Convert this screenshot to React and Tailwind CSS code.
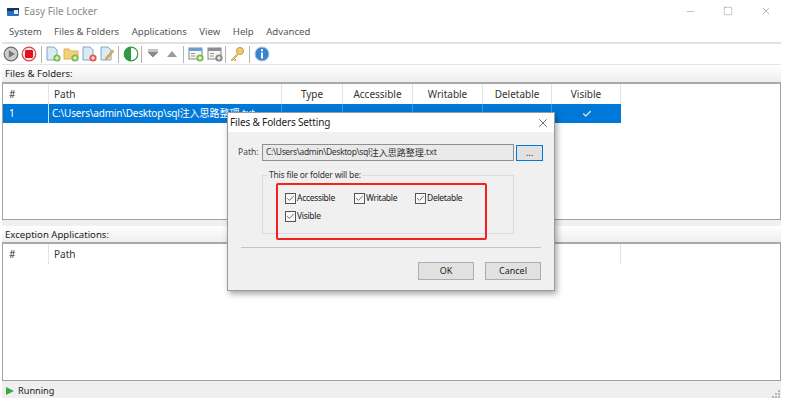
import { Check, Minus, Square, X } from 'lucide-react';

const font = "font-['Noto_Sans','Noto_Sans_CJK_SC',sans-serif]";

const columns = [
  { name: '#', width: 'w-[46px]', align: 'pl-[6px]' },
  { name: 'Path', width: 'w-[233px]', align: 'pl-[5px]' },
  { name: 'Type', width: 'w-[61px]', align: 'justify-center' },
  { name: 'Accessible', width: 'w-[70px]', align: 'justify-center' },
  { name: 'Writable', width: 'w-[70px]', align: 'justify-center' },
  { name: 'Deletable', width: 'w-[69px]', align: 'justify-center' },
  { name: 'Visible', width: 'w-[69px]', align: 'justify-center' },
];

// the lower table only has labels on the first two columns
const exceptionColumns = columns.map((c, i) => (i < 2 ? c : { ...c, name: '' }));

const Sep = () => <div className="w-px h-[17px] bg-[#b4b4b4]"></div>;

const Doc = ({ children, fill = '#dceaf6', stroke = '#7fa6c9' }) => (
  <svg width="16" height="16" viewBox="0 0 16 16">
    <path d="M2 1h7l3 3v10H2z" fill={fill} stroke={stroke} strokeWidth="1" />
    {children}
  </svg>
);

const Badge = ({ color }) => (
  <>
    <circle cx="12" cy="12" r="3.6" fill={color} />
    <path d="M10 12h4M12 10v4" stroke="#fff" strokeWidth="1" />
  </>
);

const Form = ({ head, badge }) => (
  <svg width="16" height="16" viewBox="0 0 16 16">
    <rect x="1" y="2" width="13" height="11" fill="#f4f6f8" stroke="#7b8794" />
    <rect x="1" y="2" width="13" height="3" fill={head} />
    <path d="M3 7.5h4M3 10h4" stroke="#c08a4a" strokeWidth="1" />
    <Badge color={badge} />
  </svg>
);

const Tool = ({ children, className = '' }) => (
  <div className={`w-[18px] h-[18px] flex items-center justify-center ${className}`}>{children}</div>
);

const Toolbar = () => (
  <div className="h-[21px] flex items-center border-b border-[#e6e6e6]">
    <Tool>
      <svg width="16" height="16" viewBox="0 0 16 16">
        <circle cx="8" cy="8" r="6.8" fill="#cfcfcf" stroke="#6a6a6a" strokeWidth="1.2" />
        <path d="M5.8 4.2 12 8l-6.2 3.8z" fill="#777" />
      </svg>
    </Tool>
    <Tool>
      <svg width="16" height="16" viewBox="0 0 16 16">
        <circle cx="8" cy="8" r="6.8" fill="#fbe3e3" stroke="#d8434b" strokeWidth="1.2" />
        <rect x="4" y="4" width="8" height="8" rx="1" fill="#e0101c" />
      </svg>
    </Tool>
    <div className="w-[6px] flex justify-center"><Sep /></div>
    <Tool><Doc><Badge color="#7cbc4a" /></Doc></Tool>
    <Tool>
      <svg width="16" height="16" viewBox="0 0 16 16">
        <path d="M1 3h5l1.5 2H15v8H1z" fill="#f3cf76" stroke="#d8b25e" />
        <Badge color="#7cbc4a" />
      </svg>
    </Tool>
    <Tool><Doc><Badge color="#e8564a" /></Doc></Tool>
    <Tool>
      <Doc>
        <path d="M7 11.5 13.5 4l1.4 1.2L8.4 12.8l-2 .6z" fill="#eeb04c" stroke="#b67f2c" strokeWidth="0.6" />
      </Doc>
    </Tool>
    <div className="w-[6px] ml-[-1px] flex justify-center"><Sep /></div>
    <Tool className="ml-[1px]">
      <svg width="16" height="16" viewBox="0 0 16 16">
        <circle cx="8" cy="8" r="6.8" fill="#fff" stroke="#2f9a3f" strokeWidth="1.2" />
        <path d="M8 1.2a6.8 6.8 0 0 0 0 13.6z" fill="#2f9a3f" />
      </svg>
    </Tool>
    <div className="w-[2px] flex justify-center"><Sep /></div>
    <Tool className="ml-[2px]">
      <svg width="14" height="10" viewBox="0 0 14 10">
        <path d="M2 1h10M2 3h10l-5 5z" stroke="#8a8a8a" strokeWidth="1" fill="#8a8a8a" />
      </svg>
    </Tool>
    <Tool className="ml-[1px]">
      <svg width="14" height="10" viewBox="0 0 14 10">
        <path d="M2 8h10L7 2z" fill="#9a9a9a" />
      </svg>
    </Tool>
    <div className="w-[2px] ml-[1px] flex justify-center"><Sep /></div>
    <Tool className="ml-[3px]"><Form head="#6f9fd0" badge="#7cbc4a" /></Tool>
    <Tool className="ml-[1px]"><Form head="#8a8f96" badge="#8a8a8a" /></Tool>
    <div className="w-[2px] flex justify-center"><Sep /></div>
    <Tool className="ml-[2px]">
      <svg width="16" height="16" viewBox="0 0 16 16">
        <circle cx="11" cy="5" r="3.6" fill="#f0c76a" stroke="#c9a050" />
        <path d="M8.5 7.5 2 14l1 1 1.5-1.5L6 15l1-1-1.5-1.5 3.5-3.5" fill="#f0c76a" stroke="#c9a050" strokeWidth="0.8" />
      </svg>
    </Tool>
    <div className="w-[2px] ml-[2px] flex justify-center"><Sep /></div>
    <Tool className="ml-[3px]">
      <svg width="16" height="16" viewBox="0 0 16 16">
        <circle cx="8" cy="8" r="7" fill="#3b82d0" stroke="#a8c8ea" strokeWidth="1" />
        <rect x="7" y="3.2" width="2" height="2" fill="#fff" />
        <rect x="7" y="6.5" width="2" height="6" fill="#fff" />
      </svg>
    </Tool>
  </div>
);

const SectionTitle = ({ children, className = '' }) => (
  <div className={`flex items-center pl-[3px] pt-[2px] bg-gradient-to-b from-white to-[#eeeeee] border-b-2 border-[#a9a9a9] text-[9.6px] text-[#222] ${className}`}>
    {children}
  </div>
);

const HeaderRow = ({ cols }) => (
  <div className="flex h-[20px]">
    {cols.map((c, i) => (
      <div key={i} className={`${c.width} ${c.align} flex items-center border-r border-[#e3e3e3] text-[10px] text-[#333]`}>
        {c.name}
      </div>
    ))}
  </div>
);

const SelectedRow = () => (
  <div className="flex h-[19px] bg-[#0078d7] text-white text-[10px] w-[618px]">
    <div className="w-[46px] pl-[6px] flex items-center border-r border-[#cfe4f7]">1</div>
    <div className="w-[233px] pl-[3px] flex items-center border-r border-[#3d95e0] whitespace-nowrap overflow-hidden">
      <span className="tracking-[-0.2px]">C:\Users\admin\Desktop\sql</span>注入思路整理.txt
    </div>
    <div className="w-[61px] border-r border-[#3d95e0]"></div>
    <div className="w-[70px] border-r border-[#3d95e0]"></div>
    <div className="w-[70px] border-r border-[#3d95e0]"></div>
    <div className="w-[69px] border-r border-[#3d95e0]"></div>
    <div className="w-[69px] flex items-center justify-center">
      <Check size={10} strokeWidth={3.5} className="text-[#cfe0ef]" />
    </div>
  </div>
);

const Box = ({ label, className = '' }) => (
  <label className={`flex items-center gap-[1px] text-[8.5px] tracking-[-0.3px] text-[#222] ${className}`}>
    <span className="w-[11px] h-[11px] border border-[#555] bg-[#f7f7f7] flex items-center justify-center">
      <Check size={9} strokeWidth={2} className="text-[#444]" />
    </span>
    {label}
  </label>
);

const Dialog = () => (
  <div className="absolute left-[227px] top-[112px] w-[328px] h-[179px] bg-[#f0f0f0] border border-[#9c9c9c] shadow-[2px_3px_6px_rgba(0,0,0,0.35)] flex flex-col">
    <div className="h-[19px] bg-white flex items-center justify-between pl-[2px] pr-[4px] text-[10px] tracking-[-0.15px] text-[#222]">
      <span>Files &amp; Folders Setting</span>
      <X size={14} strokeWidth={1.2} className="text-[#333]" />
    </div>
    <div className="flex-1 relative pt-[12px] flex flex-col">
      <div className="flex items-center pl-[10px] h-[17px]">
        <span className="w-[24px] text-[8.5px] text-[#444]">Path:</span>
        <div className="w-[252px] h-[17px] bg-[#e9e9e9] border border-[#8f8f8f] flex items-center pl-[3px] text-[9px] text-[#333] whitespace-nowrap">
          <span className="text-[8.5px] tracking-[-0.35px]">C:\Users\admin\Desktop\sql</span>注入思路整理<span className="text-[8.5px]">.txt</span>
        </div>
        <button className="w-[27px] h-[16px] ml-[2px] bg-[#e1e1e1] border border-[#0078d7] text-[9px] text-[#222] leading-none">...</button>
      </div>
      <div className="relative ml-[34px] mt-[14px] w-[252px] h-[59px] border border-[#dcdcdc]">
        <span className="absolute left-[5px] top-[-7px] px-[1px] bg-[#f0f0f0] text-[8.5px] tracking-[-0.2px] leading-[12px] text-[#333]">
          This file or folder will be:
        </span>
        <div className="pl-[22px] pt-[16px] flex flex-col gap-[5px]">
          <div className="flex">
            <Box label="Accessible" className="w-[69px]" />
            <Box label="Writable" className="w-[61px]" />
            <Box label="Deletable" />
          </div>
          <Box label="Visible" />
        </div>
      </div>
      <div className="mx-[13px] mt-[13px] h-px bg-[#c4c4c4]"></div>
      <div className="flex justify-end gap-[11px] pr-[13px] pt-[14px]">
        <button className="w-[56px] h-[18px] bg-[#e1e1e1] border border-[#adadad] text-[9px] text-[#222]">OK</button>
        <button className="w-[56px] h-[18px] bg-[#e1e1e1] border border-[#adadad] text-[9px] text-[#222]">Cancel</button>
      </div>
      {/* red annotation drawn over the screenshot */}
      <div className="absolute left-[48px] top-[51px] w-[211px] h-[57px] border-2 border-[#f5201c] rounded-[2px]"></div>
    </div>
  </div>
);

export default function App() {
  return (
    <div className={`relative w-[785px] h-[402px] overflow-hidden bg-white pl-[2px] pr-[4px] ${font}`}>
      {/* Title bar */}
      <div className="h-[22px] flex items-center justify-between text-[10px] text-[#8a8a8a]">
        <div className="flex items-center gap-[5px] pl-[5px]">
          <svg width="12" height="10" viewBox="0 0 12 10">
            <rect x="0" y="2" width="12" height="8" rx="1" fill="#2a6fc4" />
            <rect x="0" y="2" width="12" height="3" fill="#16345f" />
            <rect x="7" y="4" width="4" height="4" fill="#e8eef6" />
          </svg>
          <span>Easy File Locker</span>
        </div>
        <div className="flex items-center gap-[27px] pr-[9px] text-[#777]">
          <Minus size={11} strokeWidth={1} />
          <Square size={10} strokeWidth={1} />
          <X size={12} strokeWidth={1} />
        </div>
      </div>

      {/* Menu */}
      <div className="h-[22px] flex items-center gap-[12.5px] pl-[7px] pt-[1px] text-[9.6px] text-[#555] border-b-2 border-[#e2e2e2]">
        <span>System</span>
        <span>Files &amp; Folders</span>
        <span>Applications</span>
        <span>View</span>
        <span>Help</span>
        <span>Advanced</span>
      </div>

      <Toolbar />

      {/* Files & Folders */}
      <SectionTitle className="h-[19px]">Files &amp; Folders:</SectionTitle>
      <div className="h-[136px] border-x border-b border-[#a0a0a0]">
        <HeaderRow cols={columns} />
        <SelectedRow />
      </div>

      <div className="h-[6px] bg-[#f0f0f0]"></div>

      {/* Exception Applications */}
      <SectionTitle className="h-[18px]">Exception Applications:</SectionTitle>
      <div className="h-[137px] border-x border-b border-[#a0a0a0]">
        <HeaderRow cols={exceptionColumns} />
      </div>

      {/* Status bar */}
      <div className="h-[17px] bg-[#efefef] flex items-center justify-between pl-[3px] pr-[1px] pt-[3px] text-[9.2px] text-[#222]">
        <div className="flex items-center gap-[3px]">
          <svg width="10" height="10" viewBox="0 0 10 10">
            <path d="M1 1 9 5 1 9z" fill="#39a845" />
          </svg>
          <span>Running</span>
        </div>
        <svg width="8" height="8" viewBox="0 0 8 8" className="self-end">
          <path d="M6 0h2v2H6zM3 3h2v2H3zM6 3h2v2H6zM0 6h2v2H0zM3 6h2v2H3zM6 6h2v2H6z" fill="#b5b5b5" />
        </svg>
      </div>

      <Dialog />
    </div>
  );
}
